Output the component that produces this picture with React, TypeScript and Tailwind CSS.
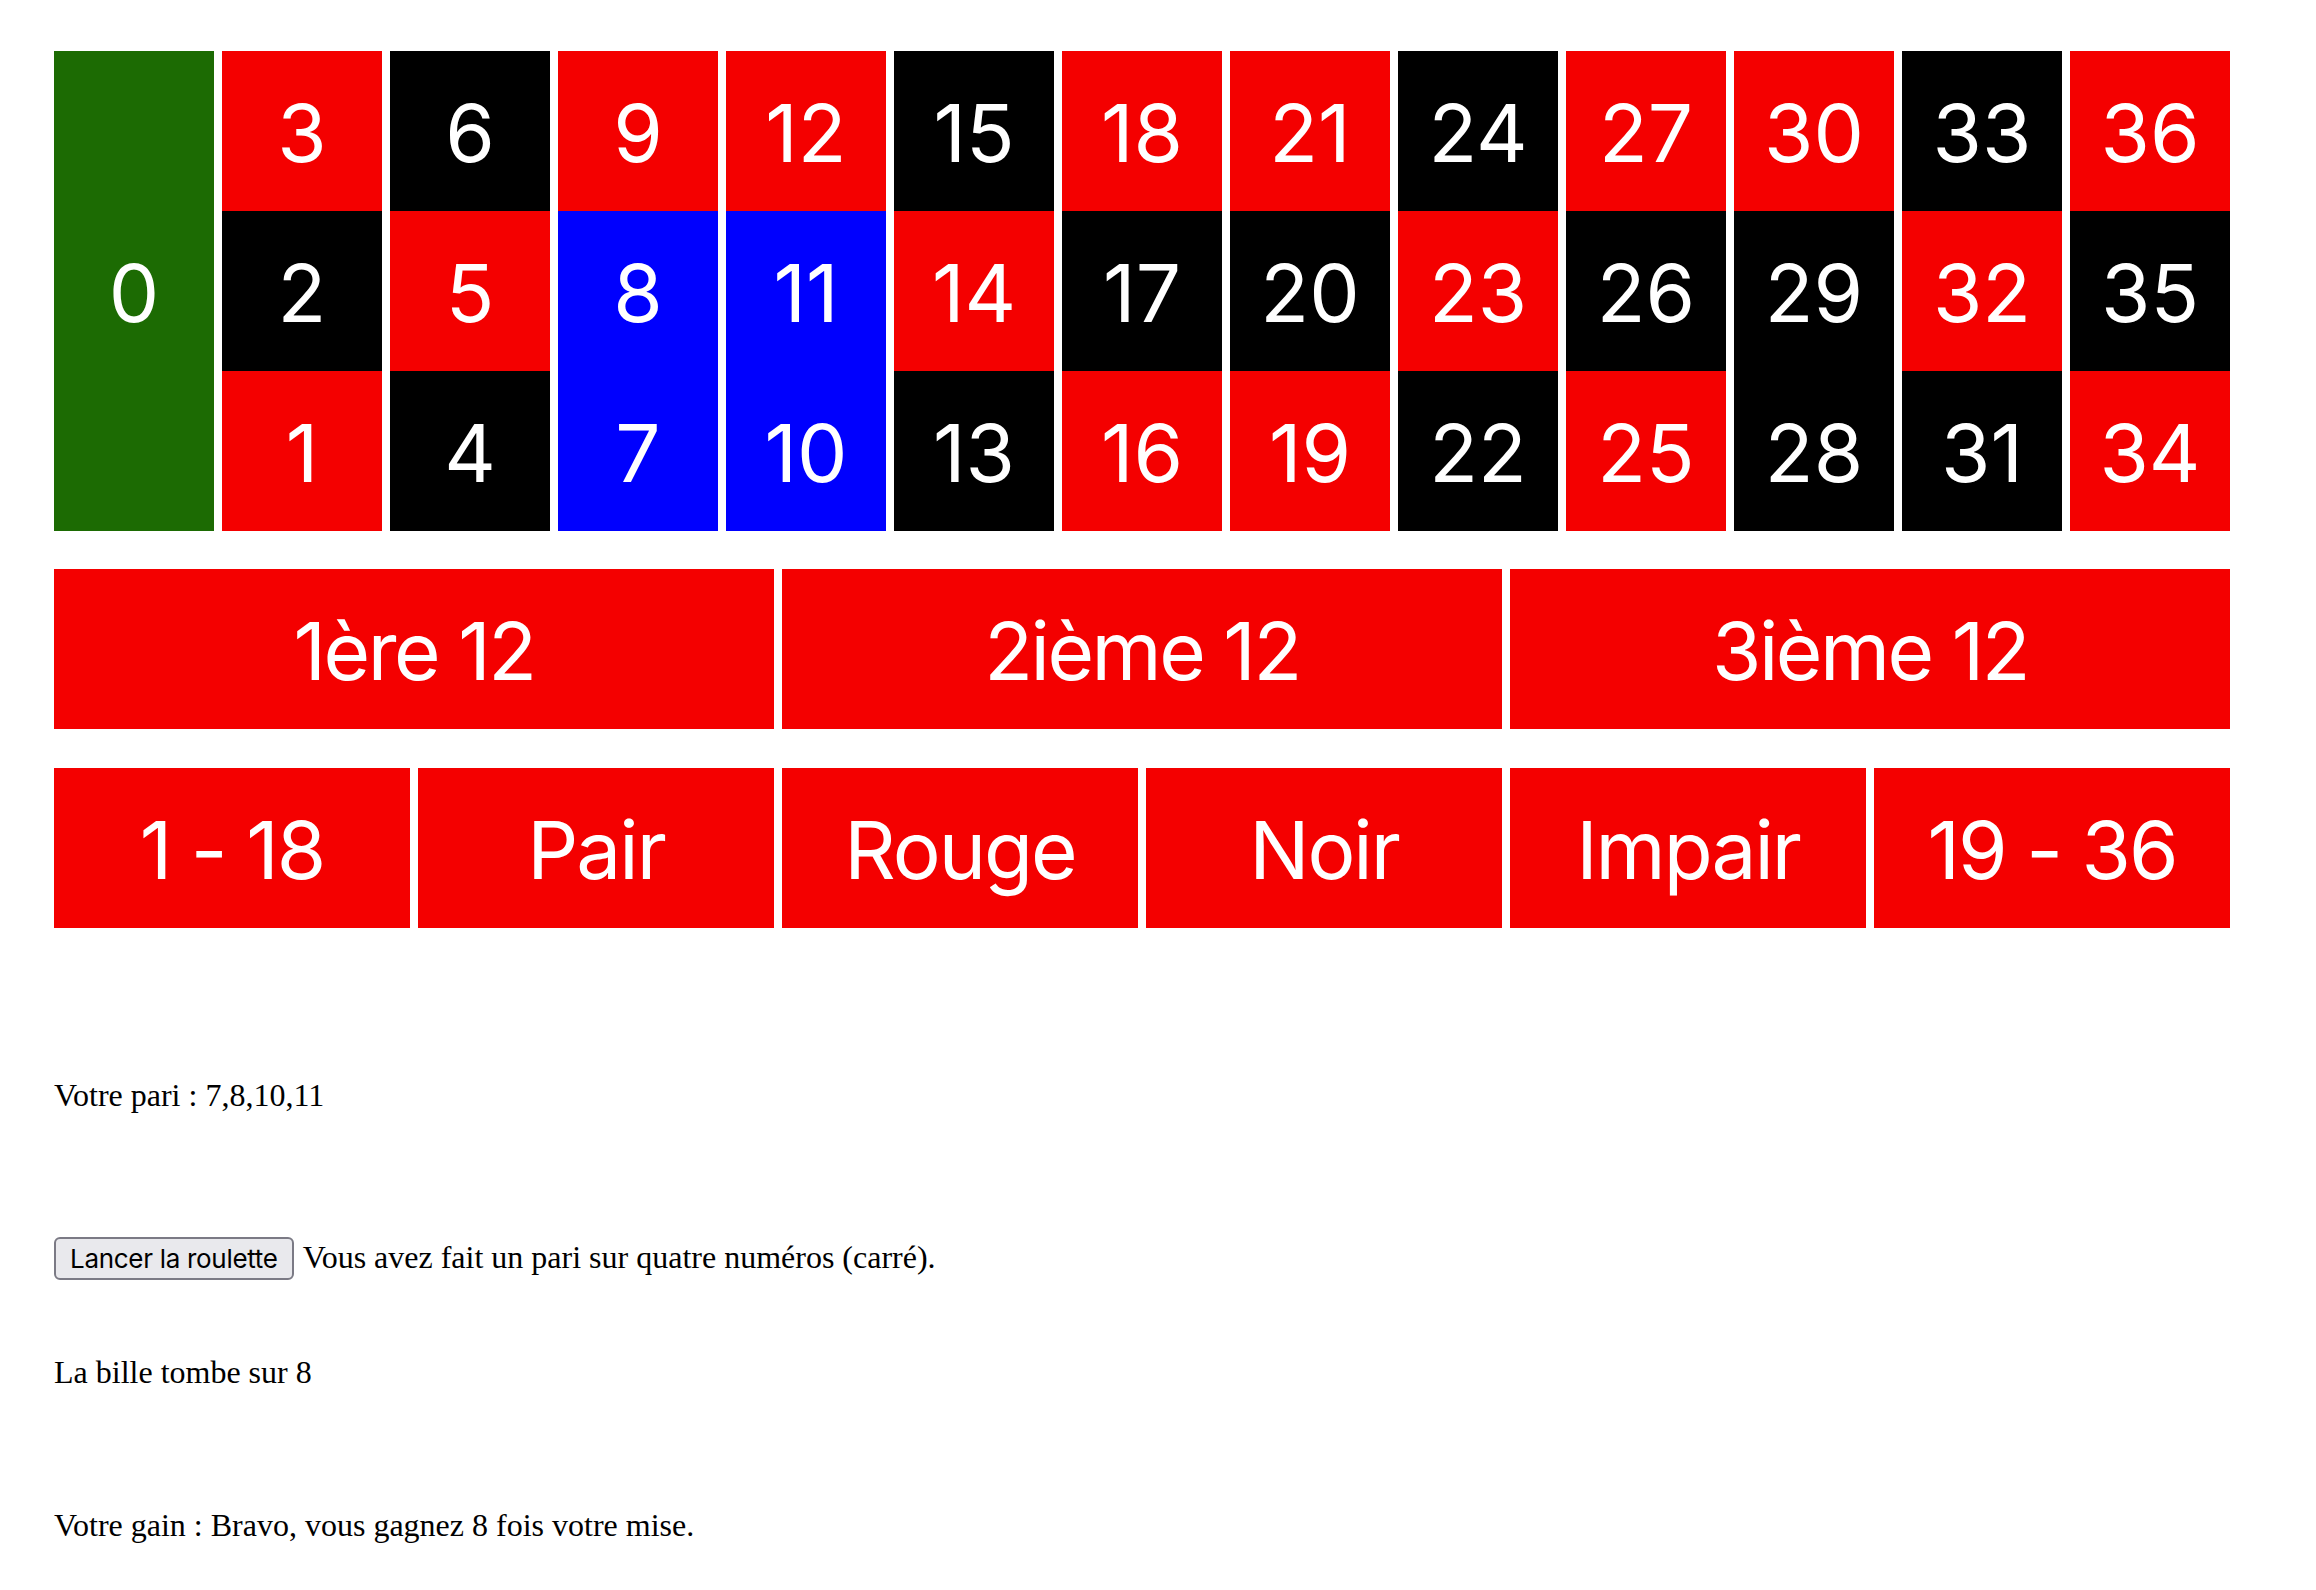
import React from "react";

const REDS = new Set([1, 3, 5, 7, 9, 12, 14, 16, 18, 19, 21, 23, 25, 27, 30, 32, 34, 36]);
const SELECTED = new Set([7, 8, 10, 11]);

function cellBg(n: number): string {
  if (SELECTED.has(n)) return "bg-[#0000fe]";
  if (REDS.has(n)) return "bg-[#f40000]";
  return "bg-black";
}

const cellText = "text-white text-[80px] leading-none font-['Inter',sans-serif] font-normal";

export default function App() {
  const columns = Array.from({ length: 12 }, (_, i) => i + 1);
  const dozens = ["1ère 12", "2ième 12", "3ième 12"];
  const outside = ["1 - 18", "Pair", "Rouge", "Noir", "Impair", "19 - 36"];

  return (
    <div className="bg-white min-h-[1590px] pl-[54px] pt-[51px] font-['Liberation_Serif',serif] text-black">
      <div className="w-[2176px] flex flex-col">
        {/* Number grid */}
        <div className="flex gap-2">
          <div className={`w-[160px] h-[480px] bg-[#1c6b03] flex items-center justify-center ${cellText}`}>
            <span className="mt-[4px]">0</span>
          </div>
          {columns.map((c) => (
            <div key={c} className="flex flex-col w-[160px]">
              {[3 * c, 3 * c - 1, 3 * c - 2].map((n) => (
                <div
                  key={n}
                  className={`h-[160px] w-[160px] flex items-center justify-center ${cellBg(n)} ${cellText}`}
                >
                  <span className="mt-[4px]">{n}</span>
                </div>
              ))}
            </div>
          ))}
        </div>

        {/* Dozens */}
        <div className="grid grid-cols-3 gap-2 mt-[38px]">
          {dozens.map((d) => (
            <div
              key={d}
              className={`h-[160px] bg-[#f40000] flex items-center justify-center ${cellText}`}
            >
              <span className="mt-[4px] tracking-[-2.5px]">{d}</span>
            </div>
          ))}
        </div>

        {/* Outside bets */}
        <div className="grid grid-cols-6 gap-2 mt-[39px]">
          {outside.map((o) => (
            <div
              key={o}
              className={`h-[160px] bg-[#f40000] flex items-center justify-center ${cellText}`}
            >
              <span className="mt-[4px] tracking-[-2px]">{o}</span>
            </div>
          ))}
        </div>

        {/* Texts */}
        <div className="mt-[149px] text-[32px] leading-[36px]">Votre pari : 7,8,10,11</div>

        <div className="mt-[124px] flex items-baseline text-[32px] leading-[36px]">
          <button className="h-[43px] px-[14px] whitespace-nowrap rounded-[6px] border-2 border-[#7b7a85] bg-[#e9e9ed] text-black text-[26px] tracking-[-0.3px] leading-none font-['Inter',sans-serif]">
            Lancer la roulette
          </button>
          <span className="ml-[9px]">Vous avez fait un pari sur quatre numéros (carré).</span>
        </div>

        <div className="mt-[74px] text-[32px] leading-[36px]">La bille tombe sur 8</div>

        <div className="mt-[117px] text-[32px] leading-[36px]">
          Votre gain : Bravo, vous gagnez 8 fois votre mise.
        </div>
      </div>
    </div>
  );
}
